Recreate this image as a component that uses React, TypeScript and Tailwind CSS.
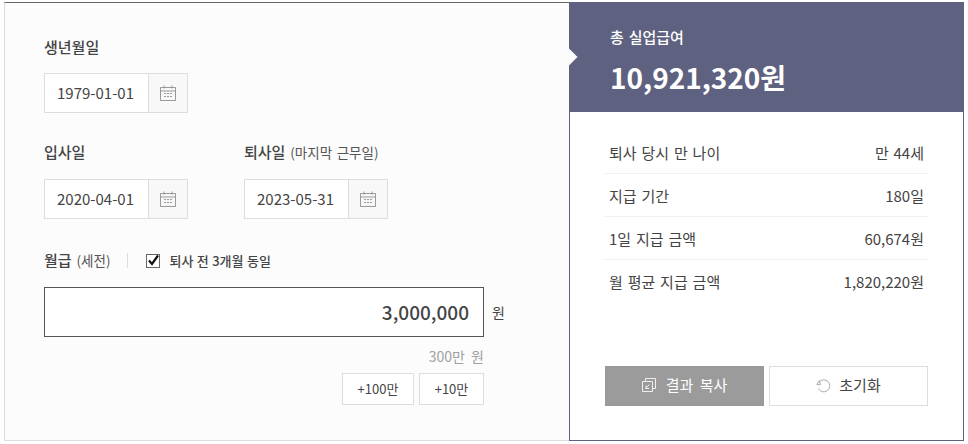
import { useState } from 'react'

const FONT = "font-['Noto_Sans_CJK_KR','Noto_Sans',sans-serif]"

// ─── Icons ────────────────────────────────────────────────────────────────────

function CalendarIcon() {
  return (
    <svg width="16" height="16" viewBox="0 0 16 16" fill="none" stroke="#999999" strokeWidth="1">
      <path d="M.5 2.5h15v13H.5z" />
      <path d="M.5 6h15M4 .5v3M12 .5v3" />
      <path d="M4 8.5h2M7 8.5h2M10 8.5h2M4 11.5h2M7 11.5h2M10 11.5h2" strokeWidth="1" />
    </svg>
  )
}

function CopyIcon() {
  return (
    <svg width="14" height="14" viewBox="0 0 14 14" fill="none" stroke="#f0f0f0" strokeWidth="1">
      <path d="M3.5 3.5V.5h10v10h-3" />
      <path d="M.5 3.5h10v10H.5z" />
      <path d="M3.5 10.5l4-4M4 7.5v3h3" />
    </svg>
  )
}

function ResetIcon() {
  return (
    <svg width="15" height="14" viewBox="0 0 15 14" fill="none" stroke="#aaaaaa" strokeWidth="1">
      <path d="M3 3.2A6 6 0 1 1 2.4 9.5" />
      <path d="M.8 5.6l2.6-3.9.9 4.1z" />
    </svg>
  )
}

// ─── DateField ────────────────────────────────────────────────────────────────

function DateField({ value }: { value: string }) {
  return (
    <div className="flex h-[40px] w-[144px] border border-[#dddddd] bg-white">
      <div className="flex w-[103px] items-center justify-center pr-[2px] text-[15px] text-[#444444]">{value}</div>
      <div className="flex flex-1 items-center justify-center border-l border-[#dddddd] bg-[#f8f8f8]">
        <CalendarIcon />
      </div>
    </div>
  )
}

const RESULT_ROWS = [
  { label: '퇴사 당시 만 나이', value: '만 44세' },
  { label: '지급 기간', value: '180일' },
  { label: '1일 지급 금액', value: '60,674원' },
  { label: '월 평균 지급 금액', value: '1,820,220원' },
]

export default function App() {
  const [same, setSame] = useState(true)

  return (
    <div className={`${FONT} ml-[4px] mt-[2px] flex h-[439px] w-[960px] [word-spacing:1.5px] text-[#444444]`}>
      {/* 입력 영역 */}
      <div className="h-full w-[565px] border-b border-l border-t border-[#dddddd] border-t-[#666666] bg-[#fcfcfc] pl-[39px] pt-[34px]">
        <div className="h-[20px] text-[15px] font-medium leading-[20px] text-[#444444]">생년월일</div>
        <div className="mt-[16px]">
          <DateField value="1979-01-01" />
        </div>

        <div className="mt-[29px] flex">
          <div className="w-[200px]">
            <div className="h-[20px] text-[15px] font-medium leading-[20px]">입사일</div>
            <div className="mt-[17px]">
              <DateField value="2020-04-01" />
            </div>
          </div>
          <div>
            <div className="h-[20px] text-[15px] font-medium leading-[20px]">
              퇴사일 <span className="text-[13.5px] font-normal text-[#555555]">(마지막 근무일)</span>
            </div>
            <div className="mt-[17px]">
              <DateField value="2023-05-31" />
            </div>
          </div>
        </div>

        <div className="mt-[31px] flex h-[20px] items-center">
          <div className="h-[20px] text-[15px] font-medium leading-[20px]">
            월급 <span className="text-[13.5px] font-normal text-[#555555]">(세전)</span>
          </div>
          <div className="ml-[17px] h-[15px] w-px bg-[#dddddd]" />
          <label className="ml-[18px] flex items-center pt-[1px]">
            <input type="checkbox" checked={same} onChange={() => setSame(!same)} className="peer sr-only" />
            <span className="relative h-[14px] w-[14px] border border-[#666666] bg-white">
              {same && (
                <svg className="absolute -left-px -top-px" width="14" height="14" viewBox="0 0 14 14" fill="none" stroke="#111111" strokeWidth="2.2">
                  <path d="M3 6.5l3 3.5 6-8.5" />
                </svg>
              )}
            </span>
            <span className="ml-[9px] text-[13px] font-medium text-[#444444] [word-spacing:0.5px]">퇴사 전 3개월 동일</span>
          </label>
        </div>

        <div className="mt-[17px] flex items-center">
          <div className="flex h-[50px] w-[440px] items-center justify-end border border-[#555555] bg-white pr-[14px] text-[19px] font-medium text-[#444444]">
            3,000,000
          </div>
          <span className="ml-[8px] text-[14px]">원</span>
        </div>

        <div className="mt-[9px] w-[440px] text-right text-[14px] leading-[20px] text-[#a0a0a0] [word-spacing:3px]">300만 원</div>

        <div className="mt-[7px] flex w-[440px] justify-end gap-[5px]">
          <button className="h-[32px] w-[72px] border border-[#dddddd] bg-white text-[13px] text-[#444444]">+100만</button>
          <button className="h-[32px] w-[65px] border border-[#dddddd] bg-white text-[13px] text-[#444444]">+10만</button>
        </div>
      </div>

      {/* 결과 영역 */}
      <div className="flex h-full w-[395px] flex-col border-x border-b border-[#5e6180] bg-white">
        <div className="relative h-[110px] bg-[#5e6180] pl-[40px] pt-[25px] text-white">
          <div className="absolute -left-px top-[49px] h-[12px] w-[12px] -translate-x-1/2 rotate-45 bg-[#fcfcfc]" />
          <div className="text-[15px] font-medium leading-[20px]">총 실업급여</div>
          <div className="mt-[12px] text-[28px] font-bold leading-[36px]">10,921,320원</div>
        </div>

        <div className="mx-[34px] mt-[19px]">
          {RESULT_ROWS.map((row) => (
            <div key={row.label} className="flex h-[43px] items-center justify-between border-b border-[#f2f2f2] px-[5px] pt-[2px] text-[15px] text-[#444444] last:border-b-0">
              <span>{row.label}</span>
              <span>{row.value}</span>
            </div>
          ))}
        </div>

        <div className="mx-[35px] mt-auto mb-[34px] flex gap-[5px]">
          <button className="flex h-[40px] w-[159px] items-center justify-center gap-[10px] border border-[#999999] bg-[#9b9b9b] pb-[2px] text-[15px] text-white [word-spacing:3px]">
            <CopyIcon />
            결과 복사
          </button>
          <button className="flex h-[40px] w-[159px] items-center justify-center gap-[8px] border border-[#dddddd] bg-white pb-[1px] text-[15px] text-[#444444]">
            <ResetIcon />
            초기화
          </button>
        </div>
      </div>
    </div>
  )
}
